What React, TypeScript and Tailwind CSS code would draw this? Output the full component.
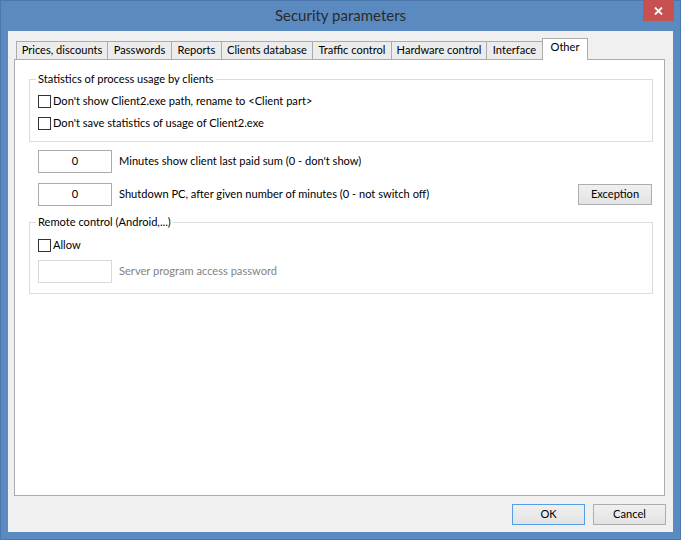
import React from 'react';

const tabs = [
  { label: 'Prices, discounts', w: 'w-[91px]' },
  { label: 'Passwords', w: 'w-[64px]' },
  { label: 'Reports', w: 'w-[50px]' },
  { label: 'Clients database', w: 'w-[91px]' },
  { label: 'Traffic control', w: 'w-[79px]' },
  { label: 'Hardware control', w: 'w-[95px]' },
  { label: 'Interface', w: 'w-[56px]' },
];

function CheckRow({ label }: { label: string }) {
  return (
    <div className="flex h-[22px] items-center">
      <span className="h-[13px] w-[13px] border border-[#333333] bg-white" />
      <span className="ml-[2px] text-black">{label}</span>
    </div>
  );
}

function Group({ title, children, className }: { title: string; children: React.ReactNode; className?: string }) {
  return (
    <fieldset className={`w-[624px] border border-[#dcdcdc] px-[8px] ${className ?? ''}`}>
      <legend className="-ml-[2px] px-[2px] leading-[16px] text-black">{title}</legend>
      {children}
    </fieldset>
  );
}

function NumberBox({ value, disabled }: { value?: string; disabled?: boolean }) {
  return (
    <div
      className={`flex h-[23px] w-[74px] shrink-0 items-center justify-center border bg-white ${
        disabled ? 'border-[#d9d9d9]' : 'border-[#acacac]'
      }`}
    >
      {value}
    </div>
  );
}

export default function App() {
  return (
    <div
      className="flex h-[540px] w-[681px] flex-col border border-[#4a78ad] bg-[#5a8abf] text-[11.1px] text-black"
      style={{ fontFamily: 'Lato, "Liberation Sans", sans-serif' }}
    >
      {/* title bar */}
      <div className="relative flex h-[30px] items-center justify-center pb-[1px]">
        <span className="text-[15px] text-[#2b2b2b]">Security parameters</span>
        <div className="absolute right-[6px] top-[-1px] flex h-[21px] w-[31px] items-center justify-center bg-[#c75050]">
          <svg width="9" height="8" viewBox="0 0 9 8">
            <path d="M1 0.5 L8 7.5 M8 0.5 L1 7.5" stroke="white" strokeWidth="1.8" />
          </svg>
        </div>
      </div>

      {/* client area */}
      <div className="ml-[7px] flex h-[501px] w-[665px] flex-col bg-[#f0f0f0] pl-[6px] pt-[7px]">
        <div className="ml-[2px] flex h-[21px] items-end">
          {tabs.map((t) => (
            <div
              key={t.label}
              className={`${t.w} flex h-[18px] items-center justify-center border-l border-t border-[#acacac] bg-[#ececec] pb-px`}
            >
              {t.label}
            </div>
          ))}
          <div className="relative z-10 -mb-px flex h-[22px] w-[46px] items-start justify-center border-x border-t border-[#acacac] bg-white">
            Other
          </div>
        </div>

        <div className="flex h-[437px] w-[651px] flex-col border border-[#acacac] bg-white pl-[14px]">
          <Group title="Statistics of process usage by clients" className="mt-[11px] pb-[7px] pt-[3px]">
            <CheckRow label="Don't show Client2.exe path, rename to <Client part>" />
            <CheckRow label="Don't save statistics of usage of Client2.exe" />
          </Group>

          <div className="ml-[9px] mt-[8px] flex items-center">
            <NumberBox value="0" />
            <span className="ml-[7px]">Minutes show client last paid sum (0 - don't show)</span>
          </div>

          <div className="ml-[9px] mt-[10px] flex w-[614px] items-center">
            <NumberBox value="0" />
            <span className="ml-[7px]">Shutdown PC, after given number of minutes (0 - not switch off)</span>
            <div className="ml-auto flex h-[21px] w-[74px] items-center justify-center border border-[#adadad] bg-gradient-to-b from-[#f0f0f0] to-[#e3e3e3]">
              Exception
            </div>
          </div>

          <Group title="Remote control (Android,...)" className="mt-[8px] pb-[10px] pt-[4px]">
            <CheckRow label="Allow" />
            <div className="mt-[4px] flex items-center">
              <NumberBox disabled />
              <span className="ml-[7px] text-[#838383]">Server program access password</span>
            </div>
          </Group>
        </div>

        <div className="mr-[7px] mt-[8px] flex justify-end gap-[8px]">
          <div className="flex h-[21px] w-[73px] items-center justify-center border border-[#569de5] bg-gradient-to-b from-[#f0f0f0] to-[#e3e3e3]">
            OK
          </div>
          <div className="flex h-[21px] w-[73px] items-center justify-center border border-[#adadad] bg-gradient-to-b from-[#f0f0f0] to-[#e3e3e3]">
            Cancel
          </div>
        </div>
      </div>
    </div>
  );
}
